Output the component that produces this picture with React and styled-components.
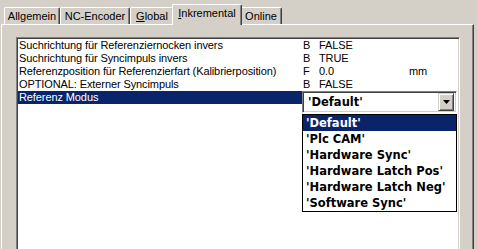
import styled, { createGlobalStyle } from 'styled-components';

const GlobalStyle = createGlobalStyle`
  body {
    margin: 0;
    background: #d4d0c8;
    font-family: "Liberation Sans", Arial, sans-serif;
    font-size: 11px;
    color: #000;
  }
`;

const tabs = [
  { label: 'Allgemein', width: 56 },
  { label: 'NC-Encoder', width: 70 },
  { label: 'Global', key: 'G', width: 44 },
  { label: 'Inkremental', key: 'I', width: 66, active: true },
  { label: 'Online', width: 42 },
];

const params = [
  { name: 'Suchrichtung für Referenziernocken invers', type: 'B', value: 'FALSE' },
  { name: 'Suchrichtung für Syncimpuls invers', type: 'B', value: 'TRUE' },
  { name: 'Referenzposition für Referenzierfart (Kalibrierposition)', type: 'F', value: '0.0', unit: 'mm' },
  { name: 'OPTIONAL: Externer Syncimpuls', type: 'B', value: 'FALSE' },
];

const modes = ["'Default'", "'Plc CAM'", "'Hardware Sync'", "'Hardware Latch Pos'", "'Hardware Latch Neg'", "'Software Sync'"];

const App = () => {
  return (
    <Window>
      <GlobalStyle />
      <TabStrip>
        {tabs.map(t => (
          <Tab key={t.label} $width={t.width} $active={t.active}>
            {t.key ? <><u>{t.key}</u>{t.label.slice(1)}</> : t.label}
          </Tab>
        ))}
      </TabStrip>
      <Panel>
        <ListBox>
          {params.map(p => (
            <Row key={p.name}>
              <Cell>{p.name}</Cell>
              <Cell>{p.type}</Cell>
              <Cell>{p.value}</Cell>
              <Cell>{p.unit}</Cell>
            </Row>
          ))}
          <Row>
            <Cell $selected>Referenz Modus</Cell>
            <Combo>
              <ComboText>'Default'</ComboText>
              <ComboButton>
                <svg width="7" height="4" viewBox="0 0 7 4">
                  <path d="M0 0h7L3.5 4z" fill="#000" />
                </svg>
              </ComboButton>
            </Combo>
            <DropList>
              {modes.map((m, i) => (
                <DropItem key={m} $selected={i === 0}>{m}</DropItem>
              ))}
            </DropList>
          </Row>
        </ListBox>
      </Panel>
    </Window>
  );
};

const Window = styled.div`
  width: 477px;
  height: 249px;
  overflow: hidden;
  display: flex;
  flex-direction: column;
`;

const TabStrip = styled.div`
  flex-shrink: 0;
  display: flex;
  align-items: flex-end;
  height: 24px;
  padding-left: 4px;
  position: relative;
  z-index: 1;
`;

const Tab = styled.div`
  box-sizing: border-box;
  width: ${p => (p.$active ? p.$width + 4 : p.$width)}px;
  height: ${p => (p.$active ? 21 : 17)}px;
  margin: ${p => (p.$active ? '0 -2px -1px' : '0')};
  position: relative;
  z-index: ${p => (p.$active ? 2 : 1)};
  background: #d4d0c8;
  border-top: 1px solid #fff;
  border-left: 1px solid #fff;
  border-right: 1px solid #404040;
  border-radius: 2px 2px 0 0;
  box-shadow: inset -1px 0 0 #808080;
  display: flex;
  justify-content: center;
  padding-top: 2px;
  white-space: nowrap;
  u {
    text-decoration: underline;
  }
`;

const Panel = styled.div`
  flex: 1;
  min-height: 0;
  overflow: hidden;
  width: 473px;
  margin-left: 1px;
  box-sizing: border-box;
  border-top: 1px solid #fff;
  border-left: 1px solid #fff;
  border-right: 1px solid #404040;
  box-shadow: inset -1px 0 0 #808080;
  padding: 12px 0 0 14px;
`;

const ListBox = styled.div`
  box-sizing: border-box;
  width: 444px;
  height: 230px;
  background: #fff;
  border-top: 1px solid #808080;
  border-left: 1px solid #808080;
  border-right: 1px solid #fff;
  box-shadow: inset 1px 1px 0 #404040, inset -1px 0 0 #d4d0c8;
  padding: 1px 1px 0 1px;
`;

const Row = styled.div`
  position: relative;
  display: grid;
  grid-template-columns: 284px 16px 90px 1fr;
  height: 13px;
  line-height: 13px;
`;

const Cell = styled.div`
  padding-left: 1px;
  white-space: nowrap;
  overflow: hidden;
  letter-spacing: -0.1px;
  background: ${p => (p.$selected ? '#0a246a' : 'transparent')};
  color: ${p => (p.$selected ? '#fff' : '#000')};
`;

const Combo = styled.div`
  position: absolute;
  left: 284px;
  top: 0;
  width: 155px;
  height: 22px;
  box-sizing: border-box;
  background: #fff;
  border-top: 1px solid #808080;
  border-left: 1px solid #808080;
  border-right: 1px solid #fff;
  border-bottom: 1px solid #fff;
  box-shadow: inset 1px 1px 0 #404040, inset -1px -1px 0 #d4d0c8;
  display: flex;
  align-items: center;
  padding: 2px;
`;

const ComboText = styled.div`
  flex: 1;
  padding-left: 3px;
  font-family: "DejaVu Sans", sans-serif;
  font-weight: bold;
  font-size: 11.5px;
`;

const ComboButton = styled.div`
  width: 16px;
  height: 18px;
  box-sizing: border-box;
  background: #d4d0c8;
  border-top: 1px solid #d4d0c8;
  border-left: 1px solid #d4d0c8;
  border-right: 1px solid #404040;
  border-bottom: 1px solid #404040;
  box-shadow: inset 1px 1px 0 #fff, inset -1px -1px 0 #808080;
  display: flex;
  align-items: center;
  justify-content: center;
`;

const DropList = styled.div`
  position: absolute;
  left: 284px;
  top: 23px;
  width: 155px;
  box-sizing: border-box;
  background: #fff;
  border: 1px solid #000;
  z-index: 3;
`;

const DropItem = styled.div`
  height: 16px;
  line-height: 16px;
  padding-left: 3px;
  font-family: "DejaVu Sans", sans-serif;
  font-weight: bold;
  font-size: 11.5px;
  white-space: nowrap;
  background: ${p => (p.$selected ? '#0a246a' : 'transparent')};
  color: ${p => (p.$selected ? '#fff' : '#000')};
`;

export default App;
